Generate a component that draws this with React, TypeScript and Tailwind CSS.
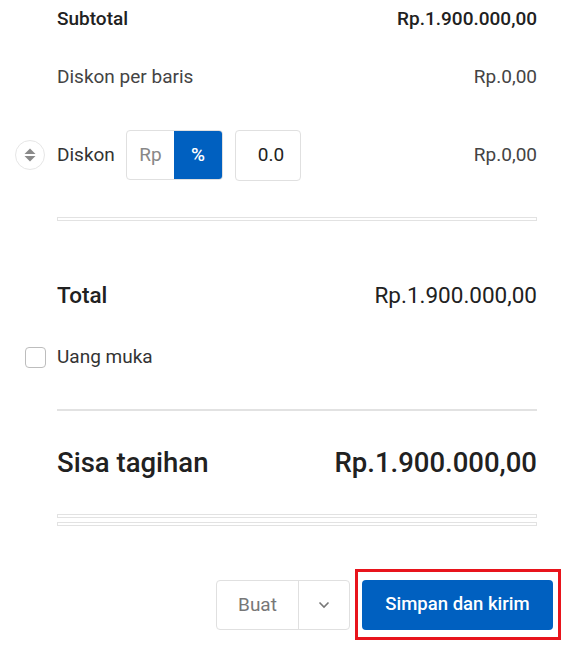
import React, { useState } from 'react';

const font = { fontFamily: 'Roboto, "Noto Sans", sans-serif' };

const Rule: React.FC<{ className?: string }> = ({ className = '' }) => (
  <div className={`h-[4px] border border-[#e2e2e2] ${className}`} />
);

export default function App() {
  const [mode, setMode] = useState<'rp' | 'pct'>('pct');
  const [dp, setDp] = useState(false);

  return (
    <div className="w-[569px] h-[655px] bg-white text-[#212121]" style={font}>
      <div className="pl-[57px] pr-[32px] pt-[7px]">
        {/* Subtotal */}
        <div className="flex justify-between items-center h-6 text-[19px] font-medium">
          <span>Subtotal</span>
          <span>Rp.1.900.000,00</span>
        </div>

        {/* Diskon per baris */}
        <div className="mt-[34px] flex justify-between items-center h-6 text-[19px] text-[#444]">
          <span>Diskon per baris</span>
          <span>Rp.0,00</span>
        </div>

        {/* Diskon */}
        <div className="mt-[41px] flex items-center h-[50px] text-[19px]">
          <button className="-ml-[42px] mr-[12px] w-[30px] h-[30px] rounded-full border border-[#e6e6e6] flex items-center justify-center">
            <svg width="14" height="16" viewBox="0 0 14 16">
              <path d="M7 1.5 L12.5 7 H1.5 Z" fill="#8a8a8a" />
              <path d="M7 14.5 L12.5 9 H1.5 Z" fill="#8a8a8a" />
            </svg>
          </button>
          <span className="text-[#333] w-[57px]">Diskon</span>
          <div className="ml-[12px] flex h-[50px] rounded-[4px] border border-[#e0e0e0] overflow-hidden">
            <button
              onClick={() => setMode('rp')}
              className={`w-[47px] flex items-center justify-center ${mode === 'rp' ? 'bg-[#0060c0] text-white font-medium' : 'text-[#888]'}`}
            >
              Rp
            </button>
            <button
              onClick={() => setMode('pct')}
              className={`w-[48px] flex items-center justify-center ${mode === 'pct' ? 'bg-[#0060c0] text-white font-medium' : 'text-[#888]'}`}
            >
              %
            </button>
          </div>
          <div className="ml-[12px] w-[66px] h-[51px] rounded-[4px] border border-[#e0e0e0] flex items-center justify-center pl-[6px] text-[#222]">
            0.0
          </div>
          <span className="ml-auto text-[#444]">Rp.0,00</span>
        </div>

        <Rule className="mt-[37px]" />

        {/* Total */}
        <div className="mt-[61px] flex justify-between items-center h-[28px] text-[22.5px]">
          <span className="font-medium">Total</span>
          <span>Rp.1.900.000,00</span>
        </div>

        {/* Uang muka */}
        <label className="mt-[36px] flex items-center h-[22px] text-[19px] text-[#333] cursor-pointer">
          <span
            onClick={() => setDp(!dp)}
            className={`-ml-[32px] mr-[11px] w-[21px] h-[21px] rounded-[4px] border ${dp ? 'bg-[#0060c0] border-[#0060c0]' : 'border-[#bdbdbd]'}`}
          />
          <span>Uang muka</span>
        </label>

        <div className="mt-[41px] h-[2px] bg-[#e2e2e2]" />

        {/* Sisa tagihan */}
        <div className="mt-[36px] flex justify-between items-center h-8 text-[27.5px] font-medium">
          <span>Sisa tagihan</span>
          <span>Rp.1.900.000,00</span>
        </div>

        <Rule className="mt-[35px]" />
        <Rule className="mt-[4px]" />
      </div>

      {/* Actions */}
      <div className="mt-[54px] flex justify-end items-center gap-[12px] pr-[16px]">
        <div className="flex h-[50px] rounded-[4px] border border-[#e0e0e0] text-[19px] text-[#777]">
          <button className="w-[82px] flex items-center justify-center border-r border-[#e0e0e0]">Buat</button>
          <button className="w-[50px] flex items-center justify-center">
            <svg width="12" height="8" viewBox="0 0 12 8" fill="none">
              <path d="M1.5 1.5 L6 6 L10.5 1.5" stroke="#777" strokeWidth="1.6" />
            </svg>
          </button>
        </div>
        <div className="relative">
          <button className="w-[191px] h-[50px] rounded-[4px] bg-[#0060c0] text-white text-[18.5px] font-medium">
            Simpan dan kirim
          </button>
          <span className="absolute -left-[7px] -right-[8px] -top-[11px] -bottom-[10px] border-[3px] border-[#e8141c] pointer-events-none" />
        </div>
      </div>
    </div>
  );
}
